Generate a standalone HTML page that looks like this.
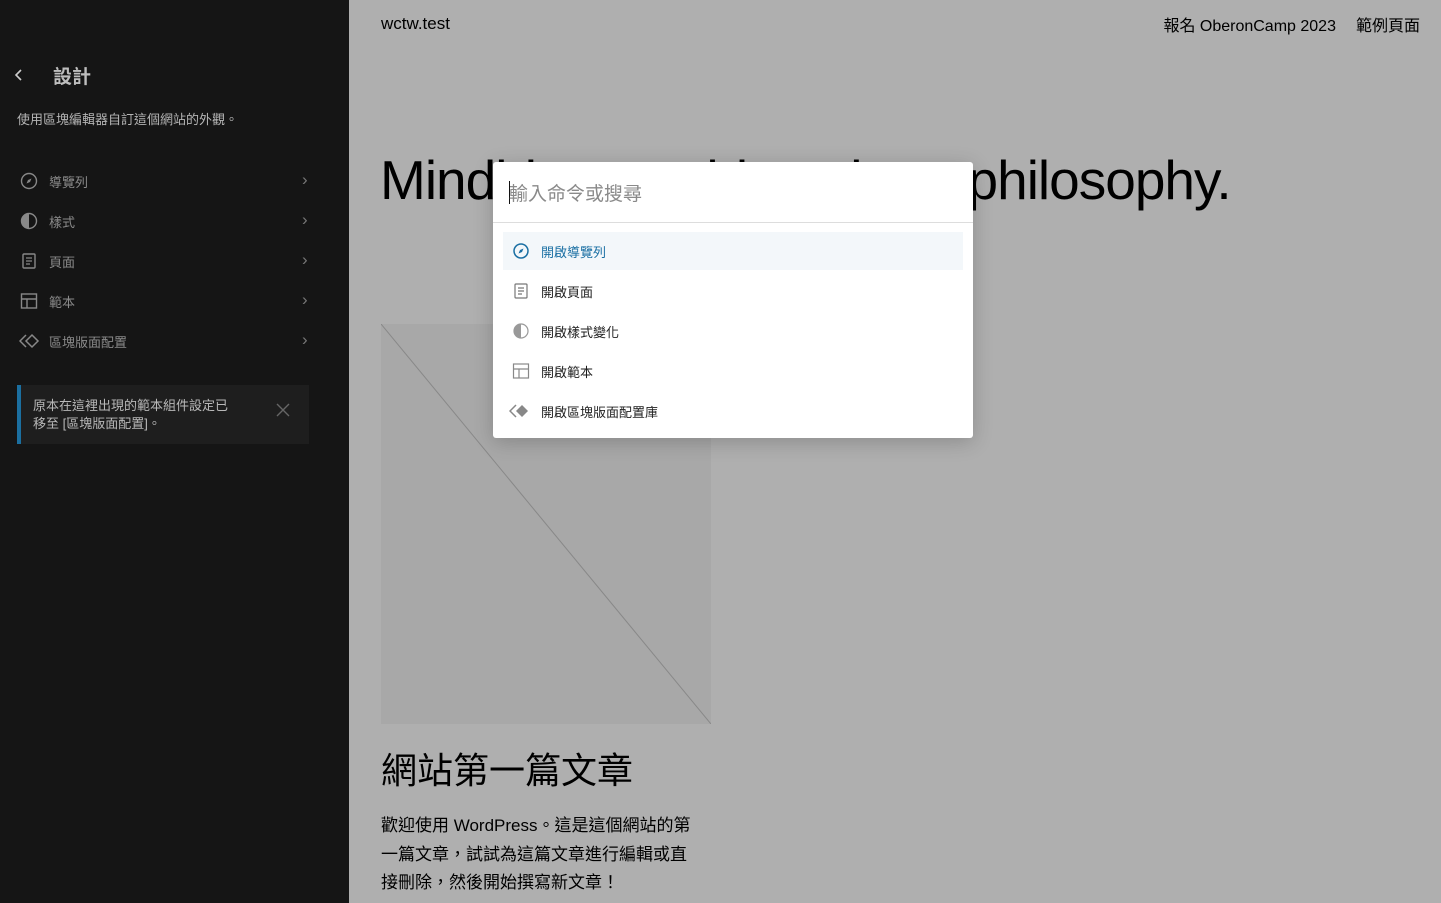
<!DOCTYPE html>
<html><head><meta charset="utf-8"><style>
*{margin:0;padding:0;box-sizing:border-box}
body{width:1441px;height:903px;overflow:hidden;font-family:"Liberation Sans","Noto Sans CJK TC",sans-serif;background:#afafaf;position:relative}
.side{position:absolute;left:0;top:0;width:349px;height:903px;background:#151515;color:#aaa}
.back{position:absolute;left:13px;top:66px}
.title{position:absolute;left:53px;top:62px;font-size:19px;font-weight:bold;color:#bdbdbd}
.desc{position:absolute;left:17px;top:109px;font-size:13px;color:#b5b5b5}
.item{position:absolute;left:19px;width:295px;height:20px;font-size:13px;color:#8a8a8a}
.item svg{position:absolute;left:0;top:0}
.item span{position:absolute;left:30px;top:1px}
.item i{position:absolute;left:283px;top:0;font-style:normal;color:#777;font-size:17px;line-height:18px}
.note{position:absolute;left:17px;top:385px;width:292px;height:59px;background:#1e1e1e;border-left:4px solid #1b6fa0;padding:12px 0 0 12px;font-size:13px;line-height:18px;color:#b8b8b8}
.note .x{position:absolute;right:18px;top:17px}
.main{position:absolute;left:349px;top:0;right:0;bottom:0;color:#000}
.site{position:absolute;left:32px;top:14px;font-size:17px}
.nav{position:absolute;right:21px;top:12px;font-size:16px}
.nav span{margin-left:20px}
.h1{position:absolute;left:31px;top:148px;font-size:55px;letter-spacing:-1px;white-space:nowrap}
.img{position:absolute;left:32px;top:324px;width:330px;height:400px;background:#a8a8a8}
.h2{position:absolute;left:32px;top:742px;font-size:36px}
.p{position:absolute;left:32px;top:812px;width:318px;font-size:17px;line-height:28.5px}
.modal{position:absolute;left:493px;top:162px;width:480px;height:276px;background:#fff;border-radius:3px;box-shadow:0 4px 20px rgba(0,0,0,.2)}
.inp{height:61px;border-bottom:1px solid #ddd;position:relative}
.inp span{position:absolute;left:16px;top:17px;font-size:19px;color:#8a8a8a}
.inp b{position:absolute;left:16px;top:19px;width:1px;height:23px;background:#111}
.row{position:absolute;left:10px;width:460px;height:38px;font-size:13px;color:#1e1e1e}
.row svg{position:absolute;left:8px;top:9px}
.row span{position:absolute;left:38px;top:10px}
.sel{background:#f3f7fa;color:#1a6fa3}
</style></head><body>
<div class="side">
<svg class="back" width="12" height="18" viewBox="0 0 12 18"><path d="M8 4L3 9l5 5" fill="none" stroke="#ccc" stroke-width="1.6"/></svg>
<div class="title">設計</div>
<div class="desc">使用區塊編輯器自訂這個網站的外觀。</div>
<div class="item" style="top:171px"><svg width="20" height="20" viewBox="0 0 20 20"><circle cx="10" cy="10" r="7.5" fill="none" stroke="#888" stroke-width="1.4"/><path d="M12.5 7.5l-1.5 3.5-3.5 1.5 1.5-3.5z" fill="#888"/></svg><span>導覽列</span><i>›</i></div>
<div class="item" style="top:211px"><svg width="20" height="20" viewBox="0 0 20 20"><circle cx="10" cy="10" r="7.5" fill="none" stroke="#888" stroke-width="1.4"/><path d="M10 2.5a7.5 7.5 0 0 0 0 15z" fill="#888"/></svg><span>樣式</span><i>›</i></div>
<div class="item" style="top:251px"><svg width="20" height="20" viewBox="0 0 20 20"><rect x="4" y="3" width="12" height="14" rx="1" fill="none" stroke="#888" stroke-width="1.4"/><path d="M7 7h6M7 10h6M7 13h4" stroke="#888" stroke-width="1.3"/></svg><span>頁面</span><i>›</i></div>
<div class="item" style="top:291px"><svg width="20" height="20" viewBox="0 0 20 20"><rect x="2.5" y="3" width="15" height="14" fill="none" stroke="#888" stroke-width="1.4"/><path d="M2.5 8h15M8 8v9" stroke="#888" stroke-width="1.4"/></svg><span>範本</span><i>›</i></div>
<div class="item" style="top:331px"><svg width="22" height="20" viewBox="0 0 22 20"><path d="M7 4L1 10l6 6M13 4l6 6-6 6-6-6z" fill="none" stroke="#888" stroke-width="1.5"/></svg><span>區塊版面配置</span><i>›</i></div>
<div class="note">原本在這裡出現的範本組件設定已<br>移至 [區塊版面配置]。<svg class="x" width="16" height="16" viewBox="0 0 16 16"><path d="M2 2l12 12M14 2L2 14" stroke="#666" stroke-width="1.4"/></svg></div>
</div>
<div class="main">
<div class="site">wctw.test</div>
<div class="nav"><span>報名 OberonCamp 2023</span><span>範例頁面</span></div>
<div class="h1">Mindblown: a blog about philosophy.</div>
<div class="img"><svg width="330" height="400"><line x1="0" y1="0" x2="330" y2="400" stroke="#888" stroke-width="1"/></svg></div>
<div class="h2">網站第一篇文章</div>
<div class="p">歡迎使用 WordPress。這是這個網站的第一篇文章，試試為這篇文章進行編輯或直接刪除，然後開始撰寫新文章！</div>
</div>
<div class="modal">
<div class="inp"><b></b><span>輸入命令或搜尋</span></div>
<div class="row sel" style="top:70px"><svg width="20" height="20" viewBox="0 0 20 20"><circle cx="10" cy="10" r="7" fill="none" stroke="#1a6fa3" stroke-width="1.5"/><path d="M12.5 7.5l-1.5 3.5-3.5 1.5 1.5-3.5z" fill="#1a6fa3"/></svg><span>開啟導覽列</span></div>
<div class="row" style="top:110px"><svg width="20" height="20" viewBox="0 0 20 20"><rect x="4" y="3" width="12" height="14" rx="1" fill="none" stroke="#777" stroke-width="1.2"/><path d="M7 7h6M7 10h6M7 13h4" stroke="#777" stroke-width="1.2"/></svg><span>開啟頁面</span></div>
<div class="row" style="top:150px"><svg width="20" height="20" viewBox="0 0 20 20"><circle cx="10" cy="10" r="7" fill="none" stroke="#999" stroke-width="1.2"/><path d="M10 3a7 7 0 0 0 0 14z" fill="#999"/></svg><span>開啟樣式變化</span></div>
<div class="row" style="top:190px"><svg width="20" height="20" viewBox="0 0 20 20"><rect x="2.5" y="3" width="15" height="14" fill="none" stroke="#888" stroke-width="1.2"/><path d="M2.5 8h15M8 8v9" stroke="#888" stroke-width="1.2"/></svg><span>開啟範本</span></div>
<div class="row" style="top:230px"><svg width="22" height="20" viewBox="0 0 22 20" style="left:6px"><path d="M7 4L1 10l6 6" fill="none" stroke="#888" stroke-width="1.5"/><path d="M13 4l6 6-6 6-6-6z" fill="#888"/></svg><span>開啟區塊版面配置庫</span></div>
</div>
</body></html>
